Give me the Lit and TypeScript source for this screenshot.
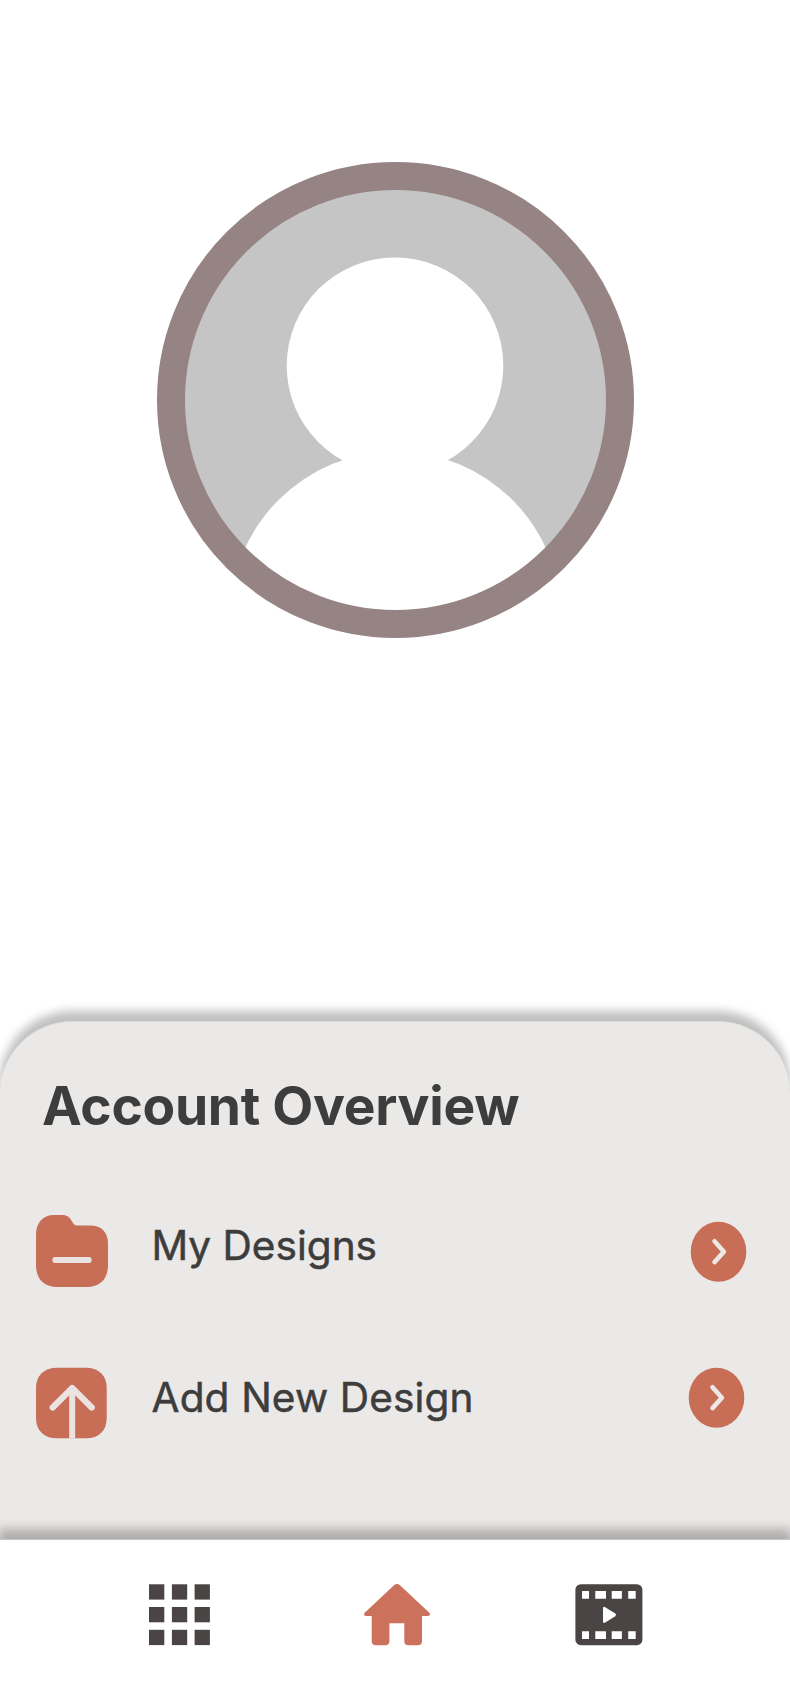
import { LitElement, html, css, svg } from "lit";
import { customElement } from "lit/decorators.js";

const folderIcon = svg`
  <svg width="72" height="72" viewBox="0 0 72 72">
    <path fill="#c86d56" d="M18 0H26C37 0 35 10.400 41 10.400H54C66 10.400 72 17.500 72 29V50C72 64 64 72 51 72H21C8 72 0 64 0 50V20C0 8 6.500 0 18 0Z"/>
    <path stroke="#ebe3e2" stroke-width="5.800" stroke-linecap="round" d="M19.200 45H52.800"/>
  </svg>`;

const uploadIcon = svg`
  <svg width="72" height="72" viewBox="0 0 72 72">
    <path fill="#c86d56" d="M21 .7H50C63 .7 70.700 8.500 70.700 21V51C70.700 63.500 63 71.300 50 71.300H21C8 71.300 0 63.500 0 51V21C0 8.500 8 .7 21 .7Z"/>
    <path fill="none" stroke="#ebe3e2" stroke-width="6.200" stroke-linecap="round" stroke-linejoin="round" d="M16.700 40.500L36.200 21L55.700 40.500"/>
    <path stroke="#ebe3e2" stroke-width="6" d="M36.200 21V71.500"/>
  </svg>`;

const chevron = svg`
  <svg width="58" height="62" viewBox="0 0 58 62">
    <ellipse cx="28.500" cy="30.700" rx="27.800" ry="30" fill="#c86d56"/>
    <path fill="none" stroke="#ebe8e6" stroke-width="4.600" stroke-linecap="round" stroke-linejoin="round" d="M24.500 20.300L33.900 30.700L24.500 41.100"/>
  </svg>`;

@customElement("app-root")
export class AppRoot extends LitElement {
  static styles = css`
    :host {
      display: flex;
      flex-direction: column;
      height: 1702px;
      background: #fff;
      color: #3d3d3d;
      font-family: Inter, "Liberation Sans", sans-serif;
      overflow: hidden;
    }
    svg { display: block; flex: none; }
    .profile {
      box-sizing: border-box;
      height: 1021px;
      padding-top: 162px;
      display: flex;
      justify-content: center;
    }
    .panel {
      box-sizing: border-box;
      height: 518px;
      padding: 51px 42px 0 36px;
      border-top: 1px solid #dadad8;
      border-radius: 72px 72px 0 0;
      background: #eae9e7;
      box-shadow: 0 -10px 10px rgba(0, 0, 0, 0.25);
    }
    h1 {
      margin: -1px 0 0 6px;
      height: 69px;
      line-height: 68px;
      font-size: 53.300px;
      letter-spacing: -0.270px;
      font-weight: 700;
      white-space: nowrap;
    }
    .row {
      display: flex;
      height: 72px;
      margin-top: 74px;
    }
    .row + .row { margin-top: 80px; padding-right: 2px; }
    .label {
      flex: 1;
      margin-left: 43.500px;
      line-height: 62px;
      font-size: 40.600px;
      font-weight: 400;
      -webkit-text-stroke: 0.500px #3d3d3d;
      white-space: nowrap;
    }
    .row + .row .label { letter-spacing: 0.140px; }
    .go { margin-top: 6px; }
    .row + .row .go { margin-top: 0; }
    nav {
      box-sizing: border-box;
      position: relative;
      height: 163px;
      padding: 44px 147px 0 149px;
      border-top: 1px solid #c9c4c5;
      display: flex;
      background: #fff;
      box-shadow: 0 -8px 10px 2px rgba(6, 0, 8, 0.26);
    }
    .home { margin: 0 145px 0 153px; }
  `;

  render() {
    const cols = [0, 22.9, 45.6];
    const rows = [0.3, 23, 45.8];
    const holes = [[7, 7], [20.3, 10.7], [36.7, 10.2], [53.2, 7.5]];
    return html`
      <section class="profile">
        <svg width="478" height="476" viewBox="156 162 478 476">
          <clipPath id="face"><ellipse cx="395.500" cy="400" rx="212" ry="211.500" /></clipPath>
          <g clip-path="url(#face)">
            <rect x="157" y="162" width="477" height="476" fill="#c5c5c5" />
            <circle cx="395" cy="365.700" r="108.300" fill="#fff" />
            <circle cx="395.500" cy="617" r="165.500" fill="#fff" />
          </g>
          <ellipse cx="395.500" cy="400" rx="224.500" ry="224" fill="none" stroke="#968484" stroke-width="28" />
        </svg>
      </section>
      <section class="panel">
        <h1>Account Overview</h1>
        <div class="row">${folderIcon}<span class="label">My Designs</span><span class="go">${chevron}</span></div>
        <div class="row">${uploadIcon}<span class="label">Add New Design</span><span class="go">${chevron}</span></div>
      </section>
      <nav>
        <svg width="62" height="62" viewBox="0 0 62 62" fill="#4b4444">
          ${rows.map((y) => cols.map((x) => svg`<rect x=${x} y=${y} width="15.300" height="15.300" />`))}
        </svg>
        <svg class="home" width="66" height="62" viewBox="0 0 66 62">
          <path fill="#cc725c" d="M30 1.300Q33 -1.300 36 1.300L65.300 28.800C66.700 30.300 65.800 32 64 32H58V57Q58 61.300 53.500 61.300H44.500Q40.300 61.300 40.300 57V39.200H25.400V57Q25.400 61.300 21 61.300H12Q7.700 61.300 7.700 57V32H2C.2 32-.7 30.300.7 28.800Z" />
        </svg>
        <svg width="68" height="62" viewBox="0 0 68 62">
          <rect x=".4" y=".2" width="67" height="61" rx="5.500" fill="#4b4444" />
          ${holes.map(([x, w]) => svg`<path fill="#fff" d=${`M${x} 7h${w}v7.700h-${w}zM${x} 47.300h${w}v7.700h-${w}z`} />`)}
          <path fill="#fff" d="M28 24.500Q28 22 30.200 23.200L40.300 29.500Q41.800 30.900 40.300 32.200L30.200 38.500Q28 39.700 28 37.300Z" />
        </svg>
      </nav>
    `;
  }
}
